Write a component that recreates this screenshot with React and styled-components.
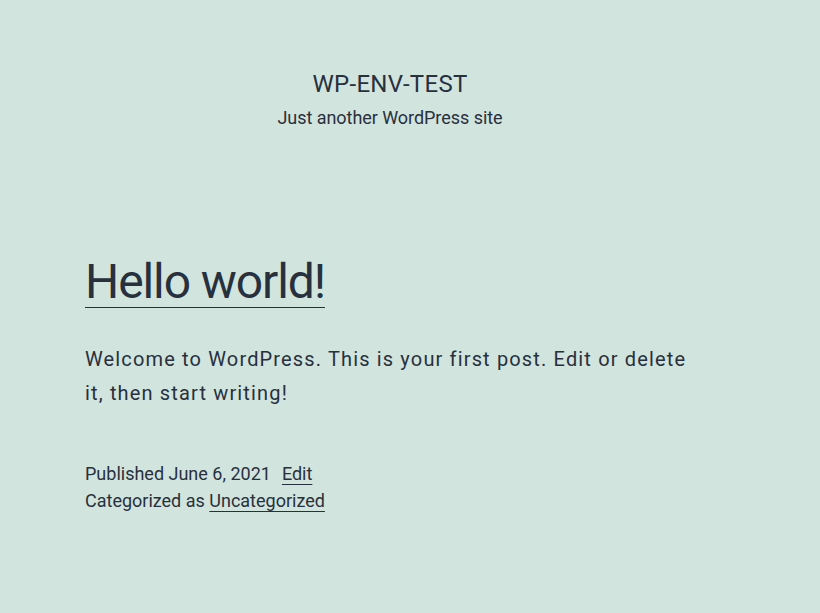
import React from 'react'
import styled, { createGlobalStyle } from 'styled-components'

const GlobalStyle = createGlobalStyle`
  html, body {
    margin: 0;
    padding: 0;
    background: #d1e4dd;
  }
  body {
    color: #28303d;
    font-family: Roboto, "Noto Sans", sans-serif;
    -webkit-font-smoothing: antialiased;
  }
`

const Page = styled.div`
  width: 610px;
  margin-left: 85px;
  padding-top: 68px;
  min-height: 545px;
`

const Header = styled.header`
  display: flex;
  flex-direction: column;
  align-items: center;
  gap: 4px;
`

const SiteTitle = styled.h1`
  margin: 0;
  font-size: 24px;
  line-height: 32px;
  font-weight: 400;
  letter-spacing: 0.3px;
  text-transform: uppercase;
`

const SiteDescription = styled.p`
  margin: 0;
  font-size: 18px;
  line-height: 27px;
  letter-spacing: -0.05px;
`

const Article = styled.article`
  margin-top: 120px;
`

const EntryTitle = styled.h2`
  margin: 0;
  font-size: 48px;
  line-height: 62px;
  font-weight: 400;
  letter-spacing: -1.1px;
  a {
    color: inherit;
    text-decoration: underline;
    text-decoration-thickness: 1px;
    text-underline-offset: 9px;
  }
`

const EntryContent = styled.p`
  margin: 29px 0 0;
  font-size: 20px;
  line-height: 34px;
  letter-spacing: 1.15px;
`

const EntryFooter = styled.footer`
  margin-top: 50px;
  font-size: 18px;
  line-height: 27px;
  a {
    color: inherit;
    text-decoration: underline;
    text-decoration-thickness: 1px;
    text-underline-offset: 4px;
  }
`

const Meta = styled.div``

const Sep = styled.span`
  margin-left: 11px;
`

export default function App() {
  return (
    <>
      <GlobalStyle />
      <Page>
        <Header>
          <SiteTitle>WP-ENV-TEST</SiteTitle>
          <SiteDescription>Just another WordPress site</SiteDescription>
        </Header>
        <Article>
          <EntryTitle>
            <a href="#">Hello world!</a>
          </EntryTitle>
          <EntryContent>
            Welcome to WordPress. This is your first post. Edit or delete it, then start writing!
          </EntryContent>
          <EntryFooter>
            <Meta>
              Published June 6, 2021<Sep><a href="#">Edit</a></Sep>
            </Meta>
            <Meta>
              Categorized as <a href="#">Uncategorized</a>
            </Meta>
          </EntryFooter>
        </Article>
      </Page>
    </>
  )
}
